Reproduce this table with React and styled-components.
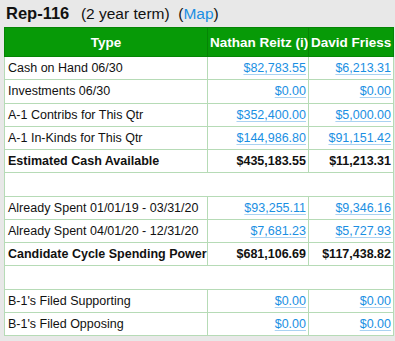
import React from 'react'
import styled, { createGlobalStyle } from 'styled-components'

const GlobalStyle = createGlobalStyle`
  html, body {
    margin: 0;
    padding: 0;
    background: #e8e8e8;
    font-family: "Liberation Sans", Arial, sans-serif;
  }
`

const Page = styled.div`
  padding: 0 2px 0 4px;
`

const Title = styled.div`
  height: 27px;
  display: flex;
  align-items: center;
  padding-left: 2px;
  color: #111;
  font-size: 15.5px;
  white-space: pre;
`

const District = styled.span`
  font-size: 16.5px;
  font-weight: bold;
  margin-right: 3px;
`

const MapLink = styled.a`
  color: #1a8fe3;
  text-decoration: none;
`

const Table = styled.table`
  width: 389px;
  border-collapse: collapse;
  background: #fff;
  border: 1px solid #b9d6b9;
  table-layout: fixed;
`

const HeadCell = styled.th`
  height: 28px;
  padding: 0 2px;
  background: #079a07;
  color: #fff;
  font-size: 13.5px;
  font-weight: bold;
  text-align: center;
  border: 1px solid #058505;
  white-space: nowrap;
  overflow: hidden;
`

const Cell = styled.td`
  height: 22.25px;
  padding: 0 2px 0 3px;
  font-size: 12.5px;
  color: #111;
  border: 1px solid #b6dbb6;
  text-align: ${p => (p.$num ? 'right' : 'left')};
  font-weight: ${p => (p.$bold ? 'bold' : 'normal')};
  white-space: nowrap;
  overflow: hidden;
`

const Money = styled.a`
  color: #1a8fe3;
  text-decoration: underline;
  text-decoration-color: #a9d2f2;
  text-underline-offset: 2px;
`

const rows = [
  { label: 'Cash on Hand 06/30', a: '$82,783.55', b: '$6,213.31', link: true },
  { label: 'Investments 06/30', a: '$0.00', b: '$0.00', link: true },
  { label: 'A-1 Contribs for This Qtr', a: '$352,400.00', b: '$5,000.00', link: true },
  { label: 'A-1 In-Kinds for This Qtr', a: '$144,986.80', b: '$91,151.42', link: true },
  { label: 'Estimated Cash Available', a: '$435,183.55', b: '$11,213.31', bold: true },
  { blank: true },
  { label: 'Already Spent 01/01/19 - 03/31/20', a: '$93,255.11', b: '$9,346.16', link: true },
  { label: 'Already Spent 04/01/20 - 12/31/20', a: '$7,681.23', b: '$5,727.93', link: true },
  { label: 'Candidate Cycle Spending Power', a: '$681,106.69', b: '$117,438.82', bold: true },
  { blank: true },
  { label: "B-1's Filed Supporting", a: '$0.00', b: '$0.00', link: true },
  { label: "B-1's Filed Opposing", a: '$0.00', b: '$0.00', link: true },
]

const Value = ({ row, v }) => (row.link ? <Money href="#">{v}</Money> : v)

const App = () => {
  return (
    <Page>
      <GlobalStyle />
      <Title>
        <District>Rep-116</District>  (2 year term)  (<MapLink href="#">Map</MapLink>)
      </Title>
      <Table>
        <colgroup>
          <col style={{ width: 203 }} />
          <col style={{ width: 101 }} />
          <col style={{ width: 85 }} />
        </colgroup>
        <thead>
          <tr>
            <HeadCell>Type</HeadCell>
            <HeadCell>Nathan Reitz (i)</HeadCell>
            <HeadCell>David Friess</HeadCell>
          </tr>
        </thead>
        <tbody>
          {rows.map((row, i) =>
            row.blank ? (
              <tr key={i}>
                <Cell colSpan={3} />
              </tr>
            ) : (
              <tr key={i}>
                <Cell $bold={row.bold}>{row.label}</Cell>
                <Cell $num $bold={row.bold}><Value row={row} v={row.a} /></Cell>
                <Cell $num $bold={row.bold}><Value row={row} v={row.b} /></Cell>
              </tr>
            )
          )}
        </tbody>
      </Table>
    </Page>
  )
}

export default App
